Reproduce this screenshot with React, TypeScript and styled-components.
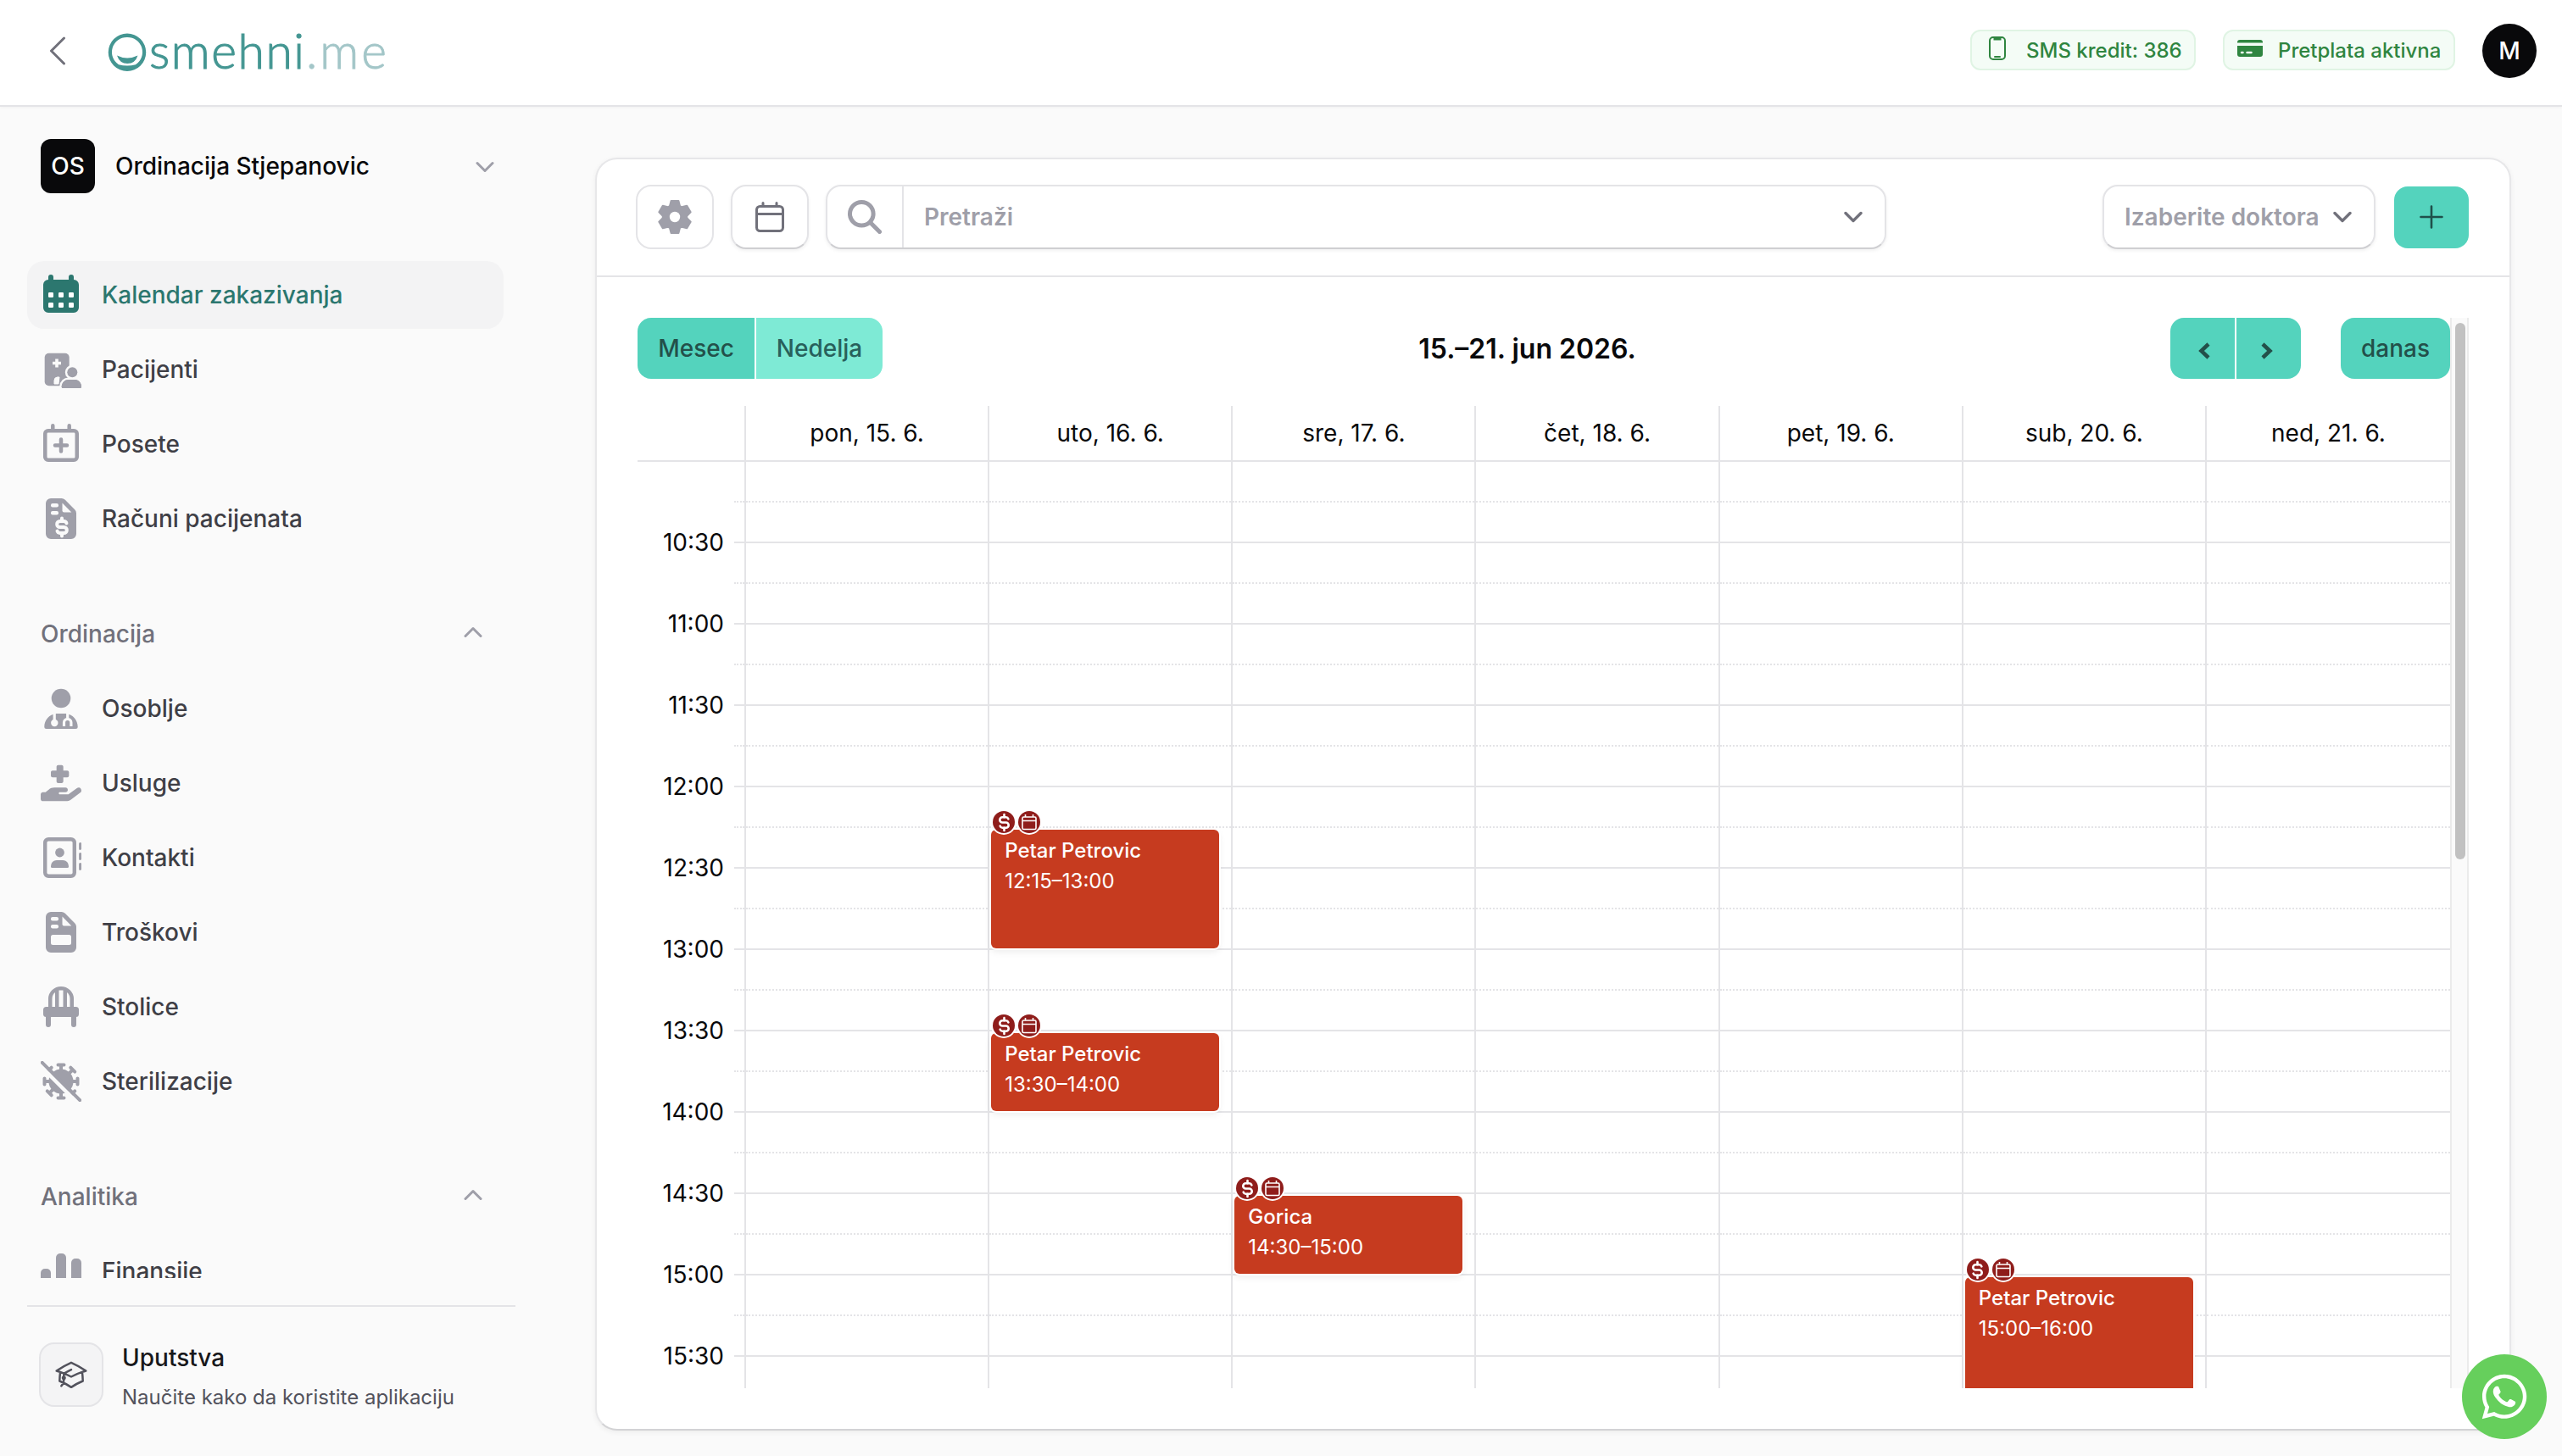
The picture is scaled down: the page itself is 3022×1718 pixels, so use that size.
import React from "react"
import styled, { createGlobalStyle } from "styled-components"
import { FaHandHoldingMedical } from "react-icons/fa6"
import { FaWhatsapp } from "react-icons/fa"
import { TbCurrencyDollar } from "react-icons/tb"

const GlobalStyle = createGlobalStyle`
    * {
        box-sizing: border-box;
    }
    body {
        margin: 0;
        background: #fafafa;
        color: #09090b;
        font-family: Inter, "Liberation Sans", sans-serif;
        font-size: 28px;
        overflow: hidden;
    }
    button {
        font: inherit;
        border: 0;
        margin: 0;
        padding: 0;
        background: none;
    }
    svg {
        display: block;
        flex: none;
    }
`

/* ---------- Layout ---------- */
const Page = styled.div`
    display: flex;
    flex-direction: column;
    width: 100vw;
    height: 100vh;
`
const Header = styled.header`
    display: flex;
    align-items: center;
    height: 126px;
    flex: none;
    padding: 0 30px 4px 58px;
    background: #fff;
    border-bottom: 2px solid #e4e4e7;
    box-shadow: 0 1px 3px rgba(0, 0, 0, 0.04);
`
const BackButton = styled.button`
    color: #71717b;
    margin-right: 48px;
`
const HeaderRight = styled.div`
    display: flex;
    align-items: center;
    margin-left: auto;
`
const Pill = styled.div<{ $width: number; $gap: number; $indent: number; $after: number }>`
    display: flex;
    align-items: center;
    width: ${p => p.$width}px;
    height: 48px;
    gap: ${p => p.$gap}px;
    padding-left: ${p => p.$indent}px;
    margin-right: ${p => p.$after}px;
    margin-top: -2px;
    border: 2px solid #e0f4e4;
    border-radius: 12px;
    background: #f4fcf6;
    color: #2f8540;
    font-size: 24px;
    font-weight: 500;
    white-space: nowrap;
    svg {
        margin-top: -4px;
    }
`
const Avatar = styled.div`
    display: flex;
    align-items: center;
    justify-content: center;
    width: 64px;
    height: 64px;
    border-radius: 50%;
    background: #09090b;
    color: #fff;
    font-weight: 500;
`
const Body = styled.div`
    display: flex;
    flex: 1;
    min-height: 0;
`

/* ---------- Sidebar ---------- */
const Sidebar = styled.aside`
    display: flex;
    flex-direction: column;
    width: 640px;
    flex: none;
    padding: 38px 32px 0;
`
const OrgRow = styled.div`
    display: flex;
    align-items: center;
    gap: 24px;
    padding: 0 25px 0 16px;
    font-weight: 500;
    svg {
        margin-left: auto;
        margin-top: 2px;
        color: #9f9fa9;
    }
`
const OrgLogo = styled(Avatar)`
    border-radius: 12px;
`
const Nav = styled.nav`
    height: 1200px;
    margin-top: 80px;
    padding-right: 14px;
    overflow: hidden;
`
const NavGroup = styled.div`
    display: flex;
    flex-direction: column;
    gap: 8px;
    margin-bottom: 56px;
`
const NavHeading = styled.div`
    display: flex;
    align-items: center;
    justify-content: space-between;
    height: 80px;
    padding: 0 25px 0 16px;
    color: #71717b;
    font-weight: 500;
    svg {
        color: #9f9fa9;
        margin-top: -4px;
    }
`
const NavItem = styled.div<{ $active?: boolean }>`
    display: flex;
    align-items: center;
    gap: 24px;
    height: 80px;
    padding: 0 16px;
    border-radius: 20px;
    background: ${p => (p.$active ? "#f3f3f4" : "transparent")};
    color: ${p => (p.$active ? "#2c776f" : "#3f3f46")};
    font-weight: 500;
    svg {
        color: ${p => (p.$active ? "#2c776f" : "#9f9fa9")};
    }
`
const HelpRow = styled.div`
    display: flex;
    gap: 22px;
    margin-top: 32px;
    padding: 42px 0 0 14px;
    border-top: 2px solid #e4e4e7;
`
const HelpIcon = styled.div`
    display: flex;
    align-items: center;
    justify-content: center;
    width: 76px;
    height: 76px;
    border: 2px solid #e4e4e7;
    border-radius: 18px;
    background: #f4f4f5;
    color: #52525c;
`
const HelpTitle = styled.div`
    line-height: 36px;
    color: #18181b;
    font-weight: 500;
`
const HelpText = styled.div`
    margin-top: 11px;
    line-height: 36px;
    font-size: 24px;
    color: #52525c;
`

/* ---------- Card and toolbar ---------- */
const Main = styled.main`
    flex: 1;
    padding: 60px 60px 30px 62px;
`
const Card = styled.section`
    height: 1502px;
    border: 2px solid #e7e7e9;
    border-bottom-color: #d3d3d5;
    border-radius: 26px;
    background: #fff;
    box-shadow: 0 2px 6px rgba(0, 0, 0, 0.06);
`
const Toolbar = styled.div`
    display: flex;
    align-items: center;
    height: 139px;
    padding: 0 48px 1px 46px;
    border-bottom: 2px solid #e4e4e7;
`
const Control = styled.div<{ $width: number; $flat?: boolean }>`
    display: flex;
    align-items: center;
    width: ${p => p.$width}px;
    height: 76px;
    margin-right: 20px;
    border: 2px solid #e4e4e7;
    border-bottom-color: ${p => (p.$flat ? "#e4e4e7" : "#cfcfd2")};
    border-radius: 18px;
    background: #fff;
    box-shadow: ${p => (p.$flat ? "none" : "0 2px 4px rgba(0, 0, 0, 0.06)")};
    color: #9f9fa9;
    font-weight: 600;
`
const IconControl = styled(Control)`
    justify-content: center;
`
const SearchIconBox = styled.div`
    display: flex;
    align-items: center;
    justify-content: center;
    width: 90px;
    height: 100%;
    border-right: 2px solid #e4e4e7;
`
const SearchInput = styled.div`
    flex: 1;
    padding-left: 24px;
`
const SearchArrow = styled.div`
    margin-right: 26px;
    color: #71717b;
`
const DoctorSelect = styled(Control)`
    justify-content: space-between;
    margin: 0 22px 0 auto;
    padding: 0 26px 0 24px;
    white-space: nowrap;
    svg {
        color: #71717b;
    }
`
const AddButton = styled.button`
    display: flex;
    align-items: center;
    justify-content: center;
    width: 88px;
    height: 73px;
    border-radius: 16px;
    background: #54d3bd;
    color: #1f504b;
`

/* ---------- Calendar ---------- */
const CalendarFrame = styled.div`
    display: flex;
    height: 1263px;
    margin: 48px 48px 0;
    overflow: hidden;
`
const Calendar = styled.div`
    flex: 1;
    min-width: 0;
`
const ScrollTrack = styled.div`
    width: 22px;
    padding: 6px 4px;
    border: solid #ebebeb;
    border-width: 0 2px;
    background: #fafafa;
`
const ScrollThumb = styled.div`
    width: 12px;
    height: 633px;
    border-radius: 6px;
    background: #c1c1c1;
`
const CalendarHeader = styled.div`
    display: flex;
    align-items: center;
    justify-content: space-between;
    height: 72px;
    margin-bottom: 32px;
`
const ButtonGroup = styled.div`
    display: flex;
    gap: 2px;
    border-radius: 16px;
    overflow: hidden;
`
const CalButton = styled.button<{ $width: number; $light?: boolean }>`
    display: flex;
    align-items: center;
    justify-content: center;
    width: ${p => p.$width}px;
    height: 72px;
    background: ${p => (p.$light ? "#7eead5" : "#54d3bd")};
    color: ${p => (p.$light ? "#28605b" : "#23504a")};
    font-weight: 500;
`
const ArrowButton = styled(CalButton)<{ $indent: number }>`
    justify-content: flex-start;
    padding: 5px 0 0 ${p => p.$indent}px;
`
const NavButtons = styled.div`
    display: flex;
    gap: 47px;
`
const Title = styled.h2`
    margin: 0;
    padding-left: 2px;
    font-size: 32px;
    font-weight: 600;
`
const WeekGrid = styled.div`
    display: grid;
    grid-template-columns: 126px repeat(6, 287.17px) 1fr;
`
const HeadRow = styled(WeekGrid)`
    height: 66px;
    border-bottom: 2px solid #e4e4e7;
`
const HeadCell = styled.div`
    display: flex;
    align-items: center;
    justify-content: center;
    border-left: 2px solid #e4e4e7;
`
const TimeColumn = styled.div`
    display: grid;
    grid-template-columns: 1fr 12px;
`
const TimeLabels = styled.div`
    padding-top: 47px;
`
const TimeLabel = styled.div`
    display: flex;
    align-items: center;
    justify-content: flex-end;
    height: 96px;
    padding-right: 12px;
`
const DayColumn = styled.div`
    position: relative;
    border-left: 2px solid #e4e4e7;
`
const Slot = styled.div<{ $major: boolean }>`
    height: 48px;
    border-top: 2px ${p => (p.$major ? "solid" : "dotted")} #e4e4e7;
    &:first-child {
        height: 46px;
        border-top: 0;
    }
`
const EventBox = styled.div<{ $top: number; $height: number }>`
    position: absolute;
    left: 2px;
    right: 14px;
    top: ${p => p.$top}px;
    height: ${p => p.$height}px;
    padding: 7px 16px;
    border-radius: 6px;
    background: #c63b1f;
    box-shadow: 0 0 0 2px #fff, 0 4px 8px rgba(0, 0, 0, 0.08);
    color: #fff;
    font-size: 24px;
    line-height: 36px;
`
const EventName = styled.div`
    font-weight: 500;
`
const EventBadges = styled.div`
    position: absolute;
    left: 2px;
    top: -22px;
    display: flex;
    gap: 4px;
`
const Badge = styled.span`
    display: flex;
    align-items: center;
    justify-content: center;
    width: 26px;
    height: 26px;
    border-radius: 50%;
    background: #8f1d1b;
    box-shadow: 0 0 0 2px #fff;
`
const WhatsAppButton = styled.button`
    position: fixed;
    right: 18px;
    bottom: 20px;
    display: flex;
    align-items: center;
    justify-content: center;
    width: 100px;
    height: 100px;
    border-radius: 50%;
    background: #66cf5c;
    color: #fff;
`

/* ---------- Icons ---------- */
const Chevron: React.FC<{ up?: boolean; stroke?: number }> = ({ up, stroke = 3 }) => (
    <svg width="22" height="14" viewBox="0 0 22 14" fill="none" stroke="currentColor" strokeWidth={stroke} strokeLinecap="round" strokeLinejoin="round">
        <path d={up ? "M2 11.5 11 2.5l9 9" : "M2 2.5l9 9 9-9"} />
    </svg>
)
const Logo = () => (
    <svg width="340" height="84" viewBox="126 18 340 84" fontFamily="Lato, sans-serif" fontSize="57" fontWeight="300">
        <g fill="#449692">
            <path fillRule="evenodd" d="M150 39.500a22 22 0 1 0 0 44.500a22 22 0 1 0 0-44.500Zm0 4.500a17.500 17.500 0 0 1 10 32.200q-10 2.600-20 0a17.500 17.500 0 0 1 10-32.200Z" />
            <path d="M138 65.500q12 6 24.500 0q-3 9.500-12.200 9.500t-12.300-9.500Z" />
            <text x="176" y="80.500" stroke="#449692" strokeWidth="1.100" textLength="183" lengthAdjust="spacing">smehni</text>
        </g>
        <text x="361" y="80.500" fill="#a3c6c8" stroke="#a3c6c8" strokeWidth="0.900" textLength="95" lengthAdjust="spacing">.me</text>
    </svg>
)
const GearIcon = () => {
    const points: string[] = []
    for (let i = 0; i < 6; i++) {
        const a = (i * Math.PI) / 3
        const tooth = [[-6, -13], [-4.4, -19], [4.4, -19], [6, -13]]
        tooth.forEach(([x, y]) => {
            points.push(`${x * Math.cos(a) - y * Math.sin(a)},${x * Math.sin(a) + y * Math.cos(a)}`)
        })
    }
    return (
        <svg width="40" height="40" viewBox="-20 -20 40 40">
            <polygon points={points.join(" ")} fill="currentColor" stroke="currentColor" strokeWidth="2" strokeLinejoin="round" />
            <circle r="6.2" fill="#fff" />
        </svg>
    )
}
const ToolbarCalendarIcon = () => (
    <svg width="34" height="36" viewBox="0 0 34 36" fill="none" stroke="#71717b" strokeWidth="3" strokeLinecap="round">
        <rect x="1.500" y="5.500" width="31" height="29" rx="4" />
        <path d="M2 14.500h30M9 1.500v4M25 1.500v4" />
    </svg>
)
const SearchIcon = () => (
    <svg width="40" height="40" viewBox="0 0 40 40" fill="none" stroke="currentColor" strokeWidth="5" strokeLinecap="round">
        <circle cx="16.300" cy="16.300" r="13.800" />
        <path d="M27 27l10.500 10.500" />
    </svg>
)
const ArrowIcon: React.FC<{ right?: boolean }> = ({ right }) => (
    <svg width="14" height="20" viewBox="0 0 14 20" fill="none" stroke="currentColor" strokeWidth="4.500">
        <path d={right ? "M2 2l8.500 8L2 18" : "M12 2l-8.500 8L12 18"} />
    </svg>
)
const PhoneIcon = () => (
    <svg width="20" height="28" viewBox="0 0 20 28" fill="none" stroke="currentColor" strokeWidth="2">
        <rect x="1" y="1" width="18" height="26" rx="4" />
        <path d="M6.500 2h7v1.500h-7zM7 24h6" strokeLinecap="round" />
    </svg>
)
const CardIcon = () => (
    <svg width="30" height="20" viewBox="0 0 30 20" fill="currentColor">
        <path d="M3 0h24a3 3 0 0 1 3 3v.5H0V3a3 3 0 0 1 3-3Z" />
        <path d="M0 7h30v10a3 3 0 0 1-3 3H3a3 3 0 0 1-3-3Z" />
        <path d="M5 15h1.500M11.500 15h5" stroke="#f4fcf6" strokeWidth="2.500" strokeLinecap="round" />
    </svg>
)
const CapIcon = () => (
    <svg width="40" height="40" viewBox="0 0 24 24" fill="none" stroke="currentColor" strokeWidth="1.500" strokeLinecap="round" strokeLinejoin="round">
        <path d="M4.260 10.147a60.438 60.438 0 0 0-.491 6.347A48.620 48.620 0 0 1 12 20.904a48.620 48.620 0 0 1 8.232-4.410 60.460 60.460 0 0 0-.491-6.347m-15.482 0a50.636 50.636 0 0 0-2.658-.813A59.906 59.906 0 0 1 12 3.493a59.903 59.903 0 0 1 10.399 5.840c-.896.248-1.783.520-2.658.814m-15.482 0A50.717 50.717 0 0 1 12 13.489a50.702 50.702 0 0 1 7.740-3.342M6.750 15a.750.750 0 1 0 0-1.500.750.750 0 0 0 0 1.500Zm0 0v-3.675A55.378 55.378 0 0 1 12 8.443m-7.007 11.550A5.981 5.981 0 0 0 6.750 15.750v-1.500" />
    </svg>
)

const NavSvg: React.FC<{ children: React.ReactNode }> = ({ children }) => (
    <svg width="48" height="48" viewBox="0 0 48 48" fill="currentColor">{children}</svg>
)
const CalendarDaysIcon = () => (
    <NavSvg>
        <path d="M9 3a3 3 0 0 1 6 0v3h18V3a3 3 0 0 1 6 0v3a6 6 0 0 1 6 6v27a6 6 0 0 1-6 6H9a6 6 0 0 1-6-6V12a6 6 0 0 1 6-6Z" />
        <g fill="#fff">
            {[9, 21, 33].map(x => [21, 33].map(y => <rect key={`${x}-${y}`} x={x} y={y} width="6" height="6" rx="1.200" />))}
        </g>
    </NavSvg>
)
const PatientIcon = () => (
    <NavSvg>
        <rect x="4.700" y="4.700" width="29" height="38.500" rx="5" />
        <path d="M19 11.500v10M14 16.500h10" stroke="#fafafa" strokeWidth="3.600" />
        <path d="M16 41v-4a4 4 0 0 1 3.500-4h2.500l-1 8Z" fill="#fafafa" stroke="#fafafa" strokeLinejoin="round" />
        <g stroke="#fafafa" strokeWidth="5" paintOrder="stroke">
            <path d="M26.500 46a1.800 1.800 0 0 1-1.800-2c.5-5 4-8 8-8h7.500c4 0 7.500 3 8 8a1.800 1.800 0 0 1-1.800 2Z" />
            <circle cx="37.300" cy="27.300" r="6" />
        </g>
        <path d="M26.500 46a1.800 1.800 0 0 1-1.800-2c.5-5 4-8 8-8h7.500c4 0 7.500 3 7.800 8a1.800 1.800 0 0 1-1.800 2Z" />
    </NavSvg>
)
const VisitIcon = () => (
    <NavSvg>
        <g fill="none" stroke="currentColor" strokeWidth="4.500" strokeLinecap="round">
            <rect x="5.250" y="8.250" width="37.500" height="34.500" rx="3.500" />
            <path d="M14.300 2.300v5M33.700 2.300v5M24 18.500v14M17 25.500h14" />
        </g>
    </NavSvg>
)
const FileShape: React.FC<{ children: React.ReactNode }> = ({ children }) => (
    <NavSvg>
        <path d="M12 0h12.500a6 6 0 0 1 4.300 1.800L40.200 13.200A6 6 0 0 1 42 17.500V42a6 6 0 0 1-6 6H12a6 6 0 0 1-6-6V6a6 6 0 0 1 6-6Z" />
        <path d="M25.500 5.500v9a2 2 0 0 0 2 2h8.800Z" fill="#fafafa" />
        <rect x="12" y="6" width="9" height="4.500" rx="2" fill="#fafafa" />
        <rect x="12" y="15" width="9" height="4.500" rx="2" fill="#fafafa" />
        {children}
    </NavSvg>
)
const InvoiceIcon = () => (
    <FileShape>
        <TbCurrencyDollar x={11} y={20} width={26} height={26} color="#fafafa" strokeWidth={3.4} />
    </FileShape>
)
const ExpenseIcon = () => (
    <FileShape>
        <rect x="12" y="27" width="24" height="12" rx="2.500" fill="#fafafa" />
    </FileShape>
)
const StaffIcon = () => (
    <NavSvg>
        <circle cx="24" cy="12" r="11.300" />
        <path d="M18 30h12c8 1 13.700 8 13.700 15.500a2.500 2.500 0 0 1-2.500 2.500H6.800a2.500 2.500 0 0 1-2.500-2.500C4.300 38 10 31 18 30Z" />
        <g fill="none" stroke="#fafafa" strokeWidth="3.200">
            <path d="M16.200 29.500v9M31.700 29.500v7M27.500 45v-4.500a4.200 4.200 0 0 1 8.400 0V45" />
        </g>
        <circle cx="16.300" cy="41" r="4.200" fill="#fafafa" />
    </NavSvg>
)
const ContactsIcon = () => (
    <NavSvg>
        <rect x="5.200" y="2.200" width="34.600" height="43.600" rx="4" fill="none" stroke="currentColor" strokeWidth="4.400" />
        <circle cx="22.500" cy="18" r="5.400" />
        <path d="M12 34.500c0-4.500 3-7.500 7-7.500h7c4 0 7 3 7 7.500a1.500 1.500 0 0 1-1.500 1.500h-18a1.500 1.500 0 0 1-1.500-1.500Z" />
        <path d="M46.600 7.400v6M46.600 19.400v6M46.600 31.400v6" stroke="currentColor" strokeWidth="3" strokeLinecap="round" />
    </NavSvg>
)
const ChairIcon = () => (
    <NavSvg>
        <path d="M9 25V14.500a15 14.500 0 0 1 30 0V25h-4.500V14.500c0-3.500-1.500-6-3.500-7.500v18h-4.500V4.500h-5V25H17V7c-2 1.500-3.500 4-3.500 7.500V25Z" />
        <rect x="3" y="24" width="42" height="12" rx="3.500" />
        <path d="M9 35v10M39 35v10" stroke="currentColor" strokeWidth="6" strokeLinecap="round" />
    </NavSvg>
)
const SterileIcon = () => (
    <NavSvg>
        <circle cx="24" cy="24" r="14.500" />
        <g stroke="currentColor" strokeLinecap="round" strokeWidth="4">
            {[0, 45, 90, 135, 180, 225, 270, 315].map(angle => (
                <path key={angle} d="M24 12V5M20.500 4.500h7" transform={`rotate(${angle} 24 24)`} />
            ))}
            <path d="M-2 4l46 46" stroke="#fafafa" strokeWidth="4.500" />
            <path d="M1.800 1.800l44.400 44.400" />
        </g>
    </NavSvg>
)
const FinanceIcon = () => (
    <NavSvg>
        <rect x="0" y="21" width="12" height="24" rx="5" />
        <rect x="18" y="3" width="12" height="42" rx="5" />
        <rect x="36" y="9" width="12" height="36" rx="5" />
    </NavSvg>
)
const BadgeCalendarIcon = () => (
    <svg width="20" height="20" viewBox="0 0 20 20" fill="none" stroke="#fff" strokeWidth="1.600">
        <rect x="2" y="4" width="16" height="14.500" rx="1.500" />
        <path d="M2 8.500h16M5.500 1v3M14.500 1v3" />
    </svg>
)

/* ---------- Data ---------- */
const mainItems = [
    { label: "Kalendar zakazivanja", icon: <CalendarDaysIcon />, active: true },
    { label: "Pacijenti", icon: <PatientIcon /> },
    { label: "Posete", icon: <VisitIcon /> },
    { label: "Računi pacijenata", icon: <InvoiceIcon /> },
]
const officeItems = [
    { label: "Osoblje", icon: <StaffIcon /> },
    { label: "Usluge", icon: <FaHandHoldingMedical size={48} /> },
    { label: "Kontakti", icon: <ContactsIcon /> },
    { label: "Troškovi", icon: <ExpenseIcon /> },
    { label: "Stolice", icon: <ChairIcon /> },
    { label: "Sterilizacije", icon: <SterileIcon /> },
]
const analyticsItems = [{ label: "Finansije", icon: <FinanceIcon /> }]

const groups = [
    { title: "", items: mainItems },
    { title: "Ordinacija", items: officeItems },
    { title: "Analitika", items: analyticsItems },
]

const days = ["pon, 15. 6.", "uto, 16. 6.", "sre, 17. 6.", "čet, 18. 6.", "pet, 19. 6.", "sub, 20. 6.", "ned, 21. 6."]
const times = ["10:30", "11:00", "11:30", "12:00", "12:30", "13:00", "13:30", "14:00", "14:30", "15:00", "15:30"]
const slots = Array.from({ length: 24 }, (_, i) => i)

const events = [
    { day: 1, name: "Petar Petrovic", start: "12:15", end: "13:00" },
    { day: 1, name: "Petar Petrovic", start: "13:30", end: "14:00" },
    { day: 2, name: "Gorica", start: "14:30", end: "15:00" },
    { day: 5, name: "Petar Petrovic", start: "15:00", end: "16:00" },
]

// 15 minutes take 48px, and the 10:30 line is 94px below the head row
const toOffset = (time: string) => {
    const [h, m] = time.split(":").map(Number)
    return 94 + (h * 60 + m - 630) * 3.2
}

const CalendarEvent: React.FC<{ name: string; start: string; end: string }> = ({ name, start, end }) => (
    <EventBox $top={toOffset(start) + 4} $height={toOffset(end) - toOffset(start) - 4}>
        <EventBadges>
            <Badge><TbCurrencyDollar size={25} color="#fff" strokeWidth={2.5} /></Badge>
            <Badge><BadgeCalendarIcon /></Badge>
        </EventBadges>
        <EventName>{name}</EventName>
        <div>{start}–{end}</div>
    </EventBox>
)

const App: React.FC = () => {
    return (
        <Page>
            <GlobalStyle />
            <Header>
                <BackButton>
                    <svg width="20" height="34" viewBox="0 0 20 34" fill="none" stroke="currentColor" strokeWidth="3" strokeLinecap="round" strokeLinejoin="round">
                        <path d="M17.500 2 2.500 17l15 15" />
                    </svg>
                </BackButton>
                <Logo />
                <HeaderRight>
                    <Pill $width={266} $gap={24} $indent={20} $after={32}><PhoneIcon />SMS kredit: 386</Pill>
                    <Pill $width={274} $gap={18} $indent={15} $after={32}><CardIcon />Pretplata aktivna</Pill>
                    <Avatar>M</Avatar>
                </HeaderRight>
            </Header>
            <Body>
                <Sidebar>
                    <OrgRow>
                        <OrgLogo>OS</OrgLogo>
                        Ordinacija Stjepanovic
                        <Chevron />
                    </OrgRow>
                    <Nav>
                        {groups.map(group => (
                            <NavGroup key={group.title}>
                                {group.title && <NavHeading>{group.title}<Chevron up /></NavHeading>}
                                {group.items.map(item => (
                                    <NavItem key={item.label} $active={"active" in item}>
                                        {item.icon}
                                        {item.label}
                                    </NavItem>
                                ))}
                            </NavGroup>
                        ))}
                    </Nav>
                    <HelpRow>
                        <HelpIcon><CapIcon /></HelpIcon>
                        <div>
                            <HelpTitle>Uputstva</HelpTitle>
                            <HelpText>Naučite kako da koristite aplikaciju</HelpText>
                        </div>
                    </HelpRow>
                </Sidebar>
                <Main>
                    <Card>
                        <Toolbar>
                            <IconControl $width={92} $flat><GearIcon /></IconControl>
                            <IconControl $width={92}><ToolbarCalendarIcon /></IconControl>
                            <Control $width={1251}>
                                <SearchIconBox><SearchIcon /></SearchIconBox>
                                <SearchInput>Pretraži</SearchInput>
                                <SearchArrow><Chevron stroke={3.4} /></SearchArrow>
                            </Control>
                            <DoctorSelect $width={322}>Izaberite doktora<Chevron stroke={3.4} /></DoctorSelect>
                            <AddButton>
                                <svg width="28" height="28" viewBox="0 0 28 28" stroke="currentColor" strokeWidth="2.600" strokeLinecap="round">
                                    <path d="M14 1.500v25M1.500 14h25" />
                                </svg>
                            </AddButton>
                        </Toolbar>
                        <CalendarFrame>
                            <Calendar>
                                <CalendarHeader>
                                    <ButtonGroup>
                                        <CalButton $width={138}>Mesec</CalButton>
                                        <CalButton $width={149} $light>Nedelja</CalButton>
                                    </ButtonGroup>
                                    <Title>15.–21. jun 2026.</Title>
                                    <NavButtons>
                                        <ButtonGroup>
                                            <ArrowButton $width={76} $indent={33}><ArrowIcon /></ArrowButton>
                                            <ArrowButton $width={76} $indent={29}><ArrowIcon right /></ArrowButton>
                                        </ButtonGroup>
                                        <ButtonGroup>
                                            <CalButton $width={129}>danas</CalButton>
                                        </ButtonGroup>
                                    </NavButtons>
                                </CalendarHeader>
                                <HeadRow>
                                    <div />
                                    {days.map(day => <HeadCell key={day}>{day}</HeadCell>)}
                                </HeadRow>
                                <WeekGrid>
                                    <TimeColumn>
                                        <TimeLabels>
                                            {times.map(time => <TimeLabel key={time}>{time}</TimeLabel>)}
                                        </TimeLabels>
                                        <div>
                                            {slots.map(i => <Slot key={i} $major={i % 2 === 0} />)}
                                        </div>
                                    </TimeColumn>
                                    {days.map((day, index) => (
                                        <DayColumn key={day}>
                                            {slots.map(i => <Slot key={i} $major={i % 2 === 0} />)}
                                            {events.filter(e => e.day === index).map(e => (
                                                <CalendarEvent key={e.start} name={e.name} start={e.start} end={e.end} />
                                            ))}
                                        </DayColumn>
                                    ))}
                                </WeekGrid>
                            </Calendar>
                            <ScrollTrack><ScrollThumb /></ScrollTrack>
                        </CalendarFrame>
                    </Card>
                </Main>
            </Body>
            <WhatsAppButton><FaWhatsapp size={60} /></WhatsAppButton>
        </Page>
    )
}

export default App
